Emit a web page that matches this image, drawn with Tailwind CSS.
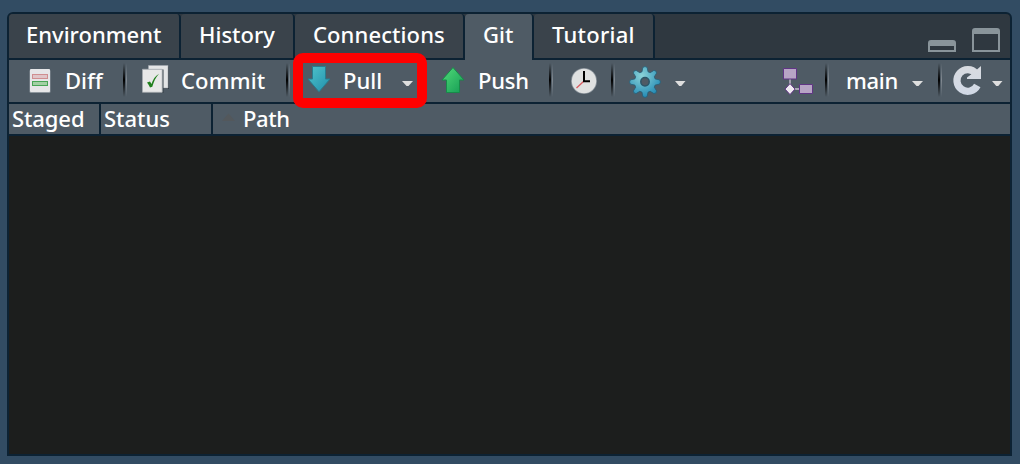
<!DOCTYPE html>
<html lang="en">
<head>
<meta charset="utf-8">
<title>Git</title>
<script src="https://cdn.jsdelivr.net/npm/@tailwindcss/browser@4"></script>
</head>
<body class="h-[464px] w-[1020px] overflow-hidden bg-[#324c63] pt-3 pl-[7px] font-['Noto_Sans','Open_Sans',sans-serif] text-[22px] leading-[30px] font-medium text-white">
<main class="relative flex h-[444px] w-[1005px] flex-col rounded-t-[6px] border-2 border-[#0c2233] bg-[#1c1e1d]">
  <nav class="flex h-[46px] shrink-0 rounded-t-[4px] border-b-2 border-[#0c2233] bg-[#2f3840] whitespace-nowrap">
    <div class="flex h-11 w-[172px] rounded-t-[4px] border-r-2 border-[#0c2233] bg-[#3a434b] pt-[5px] pl-[17px]"><span>Environment</span></div>
    <div class="flex h-11 w-[114px] rounded-t-[4px] border-r-2 border-[#0c2233] bg-[#3a434b] pt-[5px] pl-[18px]"><span>History</span></div>
    <div class="flex h-11 w-[170px] rounded-t-[4px] border-r-2 border-[#0c2233] bg-[#3a434b] pt-[5px] pl-[18px]"><span class="tracking-[0.1px]">Connections</span></div>
    <div class="flex h-[46px] w-[69px] rounded-t-[4px] border-r-2 border-[#0c2233] bg-[#4f5b65] pt-[5px] pl-[18px]"><span>Git</span></div>
    <div class="flex h-11 w-[121px] rounded-t-[4px] border-r-2 border-[#0c2233] bg-[#3a434b] pt-[5px] pl-[18px]"><span class="tracking-[0.25px]">Tutorial</span></div>
    <div class="ml-auto flex items-end gap-4 pr-[10px] pb-[6px]">
      <div class="h-3 w-7 rounded-t-[3px] border-2 border-t-[6px] border-[#89949a]"></div>
      <div class="h-6 w-7 rounded-t-[3px] border-2 border-t-[6px] border-[#89949a]"></div>
    </div>
  </nav>

  <div class="flex h-11 shrink-0 items-start border-b-2 border-[#0c2233] bg-[#4f5b65] whitespace-nowrap">
    <div class="flex w-[114px] pl-5">
      <svg class="h-[42px] w-9" viewBox="29 60 36 42"><rect x="29.500" y="69.500" width="21" height="23.500" rx="1.500" fill="#8d969d"/><rect x="30" y="69" width="20" height="23" rx="1" fill="#e6e6e8"/><rect x="32.500" y="74.500" width="15" height="4" fill="#e0c5c8" stroke="#cf8e90"/><rect x="32.500" y="81.500" width="15" height="4" fill="#a2d0a4" stroke="#48a556"/></svg>
      <span class="pt-[5px]">Diff</span>
    </div>
    <div class="mt-[3px] flex h-[34px] w-1"><i class="w-[2px] bg-linear-to-b from-transparent via-black to-transparent"></i><i class="w-px"></i><i class="w-px bg-linear-to-b from-transparent via-[#818991] to-transparent"></i></div>
    <div class="flex w-[159px] pl-[14px]">
      <svg class="h-[42px] w-10" viewBox="141 60 40 42"><path d="M149 66.500h20V89h-20z" fill="#353e46"/><path d="M148.500 65.500h19.500v22.500h-19.500z" fill="#e4e5e6" stroke="#a3aab0" stroke-width=".6"/><path d="M142.500 69.500h21V93h-21z" fill="#353e46"/><path d="M142.500 69.300h19.700v23h-19.700z" fill="#e8e8e8" stroke="#a9afb4" stroke-width=".8"/><path d="M147 82.500l3-1 1.500 2.600c1.300-4.200 3.700-8.200 7.500-10.300-3.500 3.800-5.300 8-6.700 13l-2.300.8c-.7-1.800-1.700-3.600-3-5.100z" fill="#21801d"/></svg>
      <span class="pt-[5px] tracking-[0.15px]">Commit</span>
    </div>
    <div class="mt-[3px] flex h-[34px] w-1"><i class="w-[2px] bg-linear-to-b from-transparent via-black to-transparent"></i><i class="w-px"></i><i class="w-px bg-linear-to-b from-transparent via-[#818991] to-transparent"></i></div>
    <div class="flex w-[149px] pl-[17px]">
      <svg class="h-[42px] w-9" viewBox="307 60 36 42"><defs><linearGradient id="teal" x2="1" y2="1"><stop stop-color="#4fc4cb"/><stop offset="1" stop-color="#218eab"/></linearGradient></defs><path d="M312.500 66.500h13V79h4.500L319 91.800 308 79h4.500z" fill="url(#teal)" stroke="#277c8e"/></svg>
      <span class="w-[59px] pt-[5px]">Pull</span>
      <svg class="h-[42px] w-3" viewBox="0 0 12 42"><path d="M0 21h11l-4.500 5h-2z" fill="#dedede"/></svg>
    </div>
    <div class="flex w-[110px]">
      <svg class="h-[42px] w-[39px]" viewBox="439 60 39 42"><defs><linearGradient id="green" x2="1" y2="1"><stop stop-color="#52dc79"/><stop offset="1" stop-color="#149b54"/></linearGradient></defs><path d="M453 67.500L464 80h-4.500v12.500h-13V80H442z" fill="url(#green)" stroke="#178b49"/></svg>
      <span class="pt-[5px] tracking-[-0.2px]">Push</span>
    </div>
    <div class="mt-[3px] flex h-[34px] w-1"><i class="w-[2px] bg-linear-to-b from-transparent via-black to-transparent"></i><i class="w-px"></i><i class="w-px bg-linear-to-b from-transparent via-[#818991] to-transparent"></i></div>
    <svg class="h-[42px] w-[58px]" viewBox="553 60 58 42"><circle cx="584" cy="81" r="13" fill="#879098"/><circle cx="584" cy="81" r="12.200" fill="#dfe1e1"/><path d="M584 81l-7.500 7" stroke="#d85b60" stroke-width="1.300"/><path d="M584 71v10.200h6" fill="none" stroke="#000" stroke-width="2"/></svg>
    <div class="mt-[3px] flex h-[34px] w-1"><i class="w-[2px] bg-linear-to-b from-transparent via-black to-transparent"></i><i class="w-px"></i><i class="w-px bg-linear-to-b from-transparent via-[#818991] to-transparent"></i></div>
    <svg class="h-[42px] w-[75px]" viewBox="615 60 75 42"><defs><radialGradient id="cog" cx=".4" cy=".3" r=".7"><stop stop-color="#8bd3d8"/><stop offset="1" stop-color="#248bb5"/></radialGradient></defs>
      <path fill="url(#cog)" stroke="#275e76" stroke-width=".8" stroke-linejoin="round" d="M642.800 67.500q2.200-2 4.400 0l.8 4.300 2.200.9 3.700-2.300q2.700-.1 2.700 2.700l-2.300 3.700.9 2.200 4.300.8q2 2.200 0 4.400l-4.300.8-.9 2.200 2.300 3.700q0 2.800-2.700 2.700l-3.700-2.300-2.200.9-.8 4.300q-2.200 2-4.400 0l-.8-4.300-2.200-.9-3.700 2.300q-2.700.1-2.700-2.700l2.300-3.700-.9-2.200-4.300-.8q-2-2.200 0-4.400l4.300-.8.9-2.200-2.300-3.700q0-2.800 2.700-2.700l3.700 2.300 2.200-.9z"/><circle cx="645" cy="81.700" r="4.200" fill="#4f5b65" stroke="#2c5669" stroke-width="1.500"/><path d="M675 81h10.500l-4.250 5h-2z" fill="#dedede"/></svg>
    <svg class="ml-auto h-[42px] w-[42px]" viewBox="783 60 42 42"><path d="M790 79v10h10" fill="none" stroke="#aaa6b5" stroke-width="1.800"/><path d="M783.500 68.500h13v10.500h-13z" fill="#b7a4c5" stroke="#603585"/><path d="M799.500 84.500h13v9h-13z" fill="#b7a4c5" stroke="#603585"/><path d="M790 83.600l5 5.500-5 5.500-5-5.500z" fill="#eee9f0" stroke="#603585"/></svg>
    <div class="mt-[3px] flex h-[34px] w-1"><i class="w-[2px] bg-linear-to-b from-transparent via-black to-transparent"></i><i class="w-px"></i><i class="w-px bg-linear-to-b from-transparent via-[#818991] to-transparent"></i></div>
    <div class="flex w-[109px] pl-[17px]"><span class="w-[66px] pt-[5px] tracking-[-0.3px]">main</span><svg class="h-[42px] w-3" viewBox="0 0 12 42"><path d="M0 21h11l-4.500 5h-2z" fill="#dedede"/></svg></div>
    <div class="mt-[3px] flex h-[34px] w-1"><i class="w-[2px] bg-linear-to-b from-transparent via-black to-transparent"></i><i class="w-px"></i><i class="w-px bg-linear-to-b from-transparent via-[#818991] to-transparent"></i></div>
    <svg class="h-[42px] w-[68px]" viewBox="942 60 68 42"><defs><linearGradient id="silver" gradientUnits="userSpaceOnUse" x1="967" y1="66" x2="967" y2="95"><stop stop-color="#d8dbe0"/><stop offset="1" stop-color="#d1d9e6"/></linearGradient></defs><path d="M976 73.500A10.800 10.800 0 1 0 977.300 85.500" fill="none" stroke="url(#silver)" stroke-width="7.200"/><path d="M981 66v13h-14v-1.500l6-4.500z" fill="url(#silver)"/><path d="M992 81h10.500l-4.250 5h-2z" fill="#dedede"/></svg>
  </div>

  <div class="flex h-8 shrink-0 border-b-2 border-[#0c2233] bg-[#4f5b65] whitespace-nowrap">
    <div class="h-[30px] w-[92px] border-r-2 border-[#0c2233] pl-[3px]"><div class="-mt-px tracking-[-0.1px]">Staged</div></div>
    <div class="h-[30px] w-[112px] border-r-2 border-[#0c2233] pl-[3px]"><div class="-mt-px">Status</div></div>
    <div class="flex pl-[9px]"><svg class="h-[30px] w-[21px]" viewBox="0 0 21 30"><path d="M0 17l6.500-7.500L13 17z" fill="#53585c"/></svg><span class="-mt-px tracking-[-0.4px]">Path</span></div>
  </div>
  <div class="absolute top-[39px] left-[284px] h-[55px] w-[134px] rounded-[10px] border-10 border-[#ff0000]"></div>
</main>
</body>
</html>
